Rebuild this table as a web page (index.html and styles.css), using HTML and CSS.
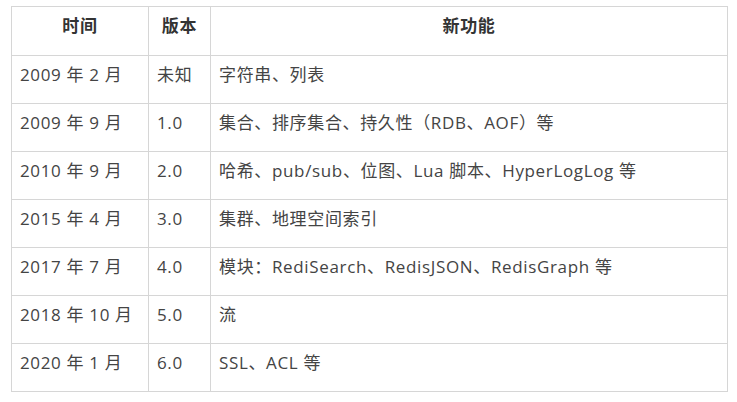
FILE: index.html
```html
<!DOCTYPE html>
<html lang="zh-CN">
<head>
<meta charset="utf-8">
<title>Redis 版本</title>
<link rel="stylesheet" href="styles.css">
</head>
<body>
<table class="versions">
  <colgroup>
    <col class="c-time">
    <col class="c-ver">
    <col class="c-feat">
  </colgroup>
  <thead>
    <tr><th>时间</th><th>版本</th><th>新功能</th></tr>
  </thead>
  <tbody>
    <tr><td>2009 年 2 月</td><td>未知</td><td>字符串、列表</td></tr>
    <tr><td>2009 年 9 月</td><td>1.0</td><td>集合、排序集合、持久性（RDB、AOF）等</td></tr>
    <tr><td>2010 年 9 月</td><td>2.0</td><td>哈希、pub/sub、位图、Lua 脚本、HyperLogLog 等</td></tr>
    <tr><td>2015 年 4 月</td><td>3.0</td><td>集群、地理空间索引</td></tr>
    <tr><td>2017 年 7 月</td><td>4.0</td><td>模块：RediSearch、RedisJSON、RedisGraph 等</td></tr>
    <tr><td>2018 年 10 月</td><td>5.0</td><td>流</td></tr>
    <tr><td>2020 年 1 月</td><td>6.0</td><td>SSL、ACL 等</td></tr>
  </tbody>
</table>
</body>
</html>
```
FILE: styles.css
```css
html, body {
  margin: 0;
  padding: 0;
  background: #ffffff;
}
body {
  font-family: "Open Sans", "Noto Sans CJK SC", sans-serif;
  font-size: 17px;
  letter-spacing: 0.65px;
  color: #444444;
}
.versions {
  margin: 6px 0 0 11px;
  border-collapse: collapse;
  table-layout: fixed;
  width: 716px;
}
.c-time { width: 137px; }
.c-ver { width: 62px; }
.c-feat { width: 517px; }
.versions th,
.versions td {
  border: 1px solid #d6d6d6;
  padding: 7px 8px 0;
  line-height: 24px;
  vertical-align: top;
  text-align: left;
  white-space: nowrap;
}
.versions th {
  height: 41px;
  text-align: center;
  font-weight: 700;
  color: #333333;
}
.versions td {
  height: 40px;
}
```
